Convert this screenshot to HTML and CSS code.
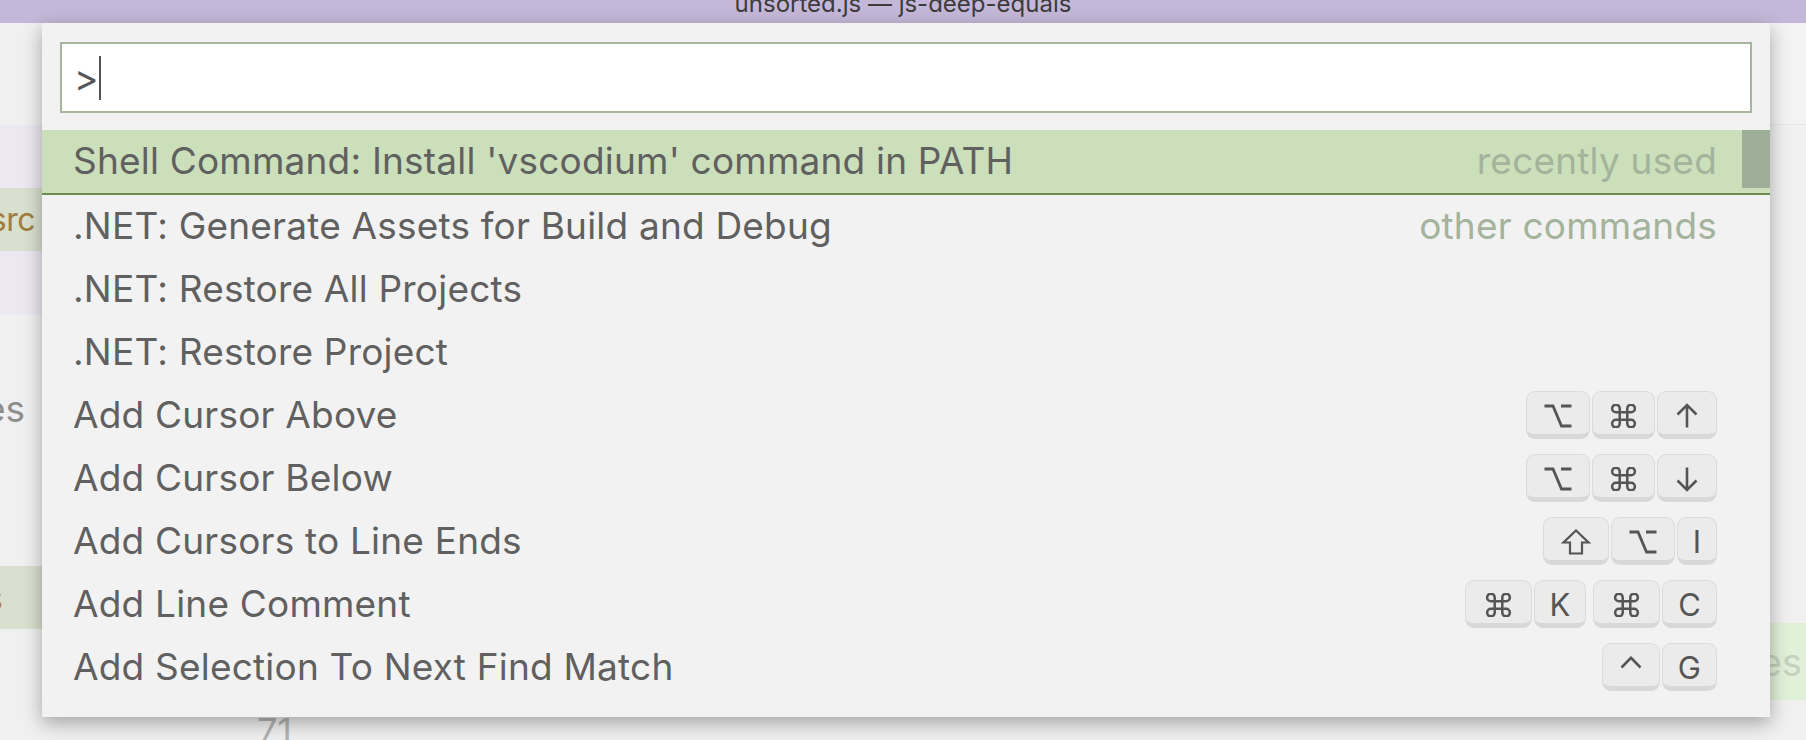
FILE: index.html
```html
<!DOCTYPE html>
<html>
<head>
<meta charset="utf-8">
<title>Command Palette</title>
<link rel="stylesheet" href="styles.css">
</head>
<body>
<div class="titlebar"><span class="title">unsorted.js — js-deep-equals</span></div>
<div class="workbench">
  <div class="sidebar">
    <div class="sb-head"></div>
    <div class="sb-row hover"></div>
    <div class="sb-row selected"><span class="folder">src</span></div>
    <div class="sb-row hover"></div>
    <div class="sb-row"></div>
    <div class="sb-row"><span class="muted">es</span></div>
    <div class="sb-row"></div>
    <div class="sb-row"></div>
    <div class="sb-row selected"><span class="file">s</span></div>
  </div>
  <div class="editor">
    <div class="tabs"></div>
    <div class="editor-body">
      <div class="find-band"><span>es</span></div>
      <div class="gutter-line">71</div>
    </div>
  </div>
</div>

<div class="quick-input">
  <div class="qi-header">
    <div class="qi-box"><span class="qi-value">&gt;</span><span class="caret"></span></div>
  </div>
  <div class="qi-list">
    <div class="qi-row focused"><span class="label">Shell Command: Install 'vscodium' command in PATH</span><span class="desc">recently used</span></div>
    <div class="qi-row"><span class="label">.NET: Generate Assets for Build and Debug</span><span class="desc">other commands</span></div>
    <div class="qi-row"><span class="label">.NET: Restore All Projects</span></div>
    <div class="qi-row"><span class="label">.NET: Restore Project</span></div>
    <div class="qi-row"><span class="label">Add Cursor Above</span>
      <span class="keys">
        <span class="key"><svg class="k-opt" width="32" height="26" viewBox="0 0 32 26"><path d="M2.5 3H11L19.5 23H29.5M19 3H29.5"/></svg></span>
        <span class="key"><svg class="k-cmd" width="31" height="24" viewBox="2.5 2.5 19 19"><path d="M9 9V6a3 3 0 1 0-3 3H18a3 3 0 1 0-3-3V18a3 3 0 1 0 3-3H6a3 3 0 1 0 3 3Z"/></svg></span>
        <span class="key"><svg class="k-arrow" width="28" height="26" viewBox="0 0 28 26"><path d="M14 2V24.5M4.5 11.5L14 2L23.5 11.5"/></svg></span>
      </span>
    </div>
    <div class="qi-row"><span class="label">Add Cursor Below</span>
      <span class="keys">
        <span class="key"><svg class="k-opt" width="32" height="26" viewBox="0 0 32 26"><path d="M2.5 3H11L19.5 23H29.5M19 3H29.5"/></svg></span>
        <span class="key"><svg class="k-cmd" width="31" height="24" viewBox="2.5 2.5 19 19"><path d="M9 9V6a3 3 0 1 0-3 3H18a3 3 0 1 0-3-3V18a3 3 0 1 0 3-3H6a3 3 0 1 0 3 3Z"/></svg></span>
        <span class="key"><svg class="k-arrow" width="28" height="26" viewBox="0 0 28 26"><path d="M14 1.5V24M4.5 14.5L14 24L23.5 14.5"/></svg></span>
      </span>
    </div>
    <div class="qi-row"><span class="label">Add Cursors to Line Ends</span>
      <span class="keys">
        <span class="key"><svg class="k-shift" width="34" height="26" viewBox="0 0 34 26"><path d="M17 1.5L29.5 13.5H23V24.5H11V13.5H4.5Z"/></svg></span>
        <span class="key"><svg class="k-opt" width="32" height="26" viewBox="0 0 32 26"><path d="M2.5 3H11L19.5 23H29.5M19 3H29.5"/></svg></span>
        <span class="key">I</span>
      </span>
    </div>
    <div class="qi-row"><span class="label">Add Line Comment</span>
      <span class="keys">
        <span class="key wide"><svg class="k-cmd" width="31" height="24" viewBox="2.5 2.5 19 19"><path d="M9 9V6a3 3 0 1 0-3 3H18a3 3 0 1 0-3-3V18a3 3 0 1 0 3-3H6a3 3 0 1 0 3 3Z"/></svg></span>
        <span class="key">K</span>
        <span class="chord-sep"></span>
        <span class="key wide"><svg class="k-cmd" width="31" height="24" viewBox="2.5 2.5 19 19"><path d="M9 9V6a3 3 0 1 0-3 3H18a3 3 0 1 0-3-3V18a3 3 0 1 0 3-3H6a3 3 0 1 0 3 3Z"/></svg></span>
        <span class="key">C</span>
      </span>
    </div>
    <div class="qi-row"><span class="label">Add Selection To Next Find Match</span>
      <span class="keys">
        <span class="key"><svg class="k-ctrl" width="26" height="24" viewBox="0 0 26 24"><path d="M3.5 11.5L13 1.8L22.5 11.5"/></svg></span>
        <span class="key">G</span>
      </span>
    </div>
    <div class="scroll-thumb"></div>
  </div>
</div>
</body>
</html>
```

FILE: styles.css
```css
* { box-sizing: border-box; }

html, body {
  margin: 0;
  padding: 0;
}

body {
  width: 1806px;
  height: 740px;
  overflow: hidden;
  position: relative;
  background: #f0f0f0;
  font-family: Inter, "Liberation Sans", sans-serif;
}

/* ---------- window title ---------- */
.titlebar {
  height: 23px;
  background: #c5b7d8;
  display: flex;
  justify-content: center;
  align-items: flex-end;
  padding-bottom: 7px;
  overflow: hidden;
}

.title {
  font-size: 24px;
  line-height: 25px;
  color: #3c3c3c;
  white-space: nowrap;
}

/* ---------- workbench underneath ---------- */
.workbench {
  display: flex;
  height: 717px;
}

.sidebar {
  width: 148px;
  flex: none;
  display: flex;
  flex-direction: column;
  background: #f0f0f0;
  overflow: hidden;
  font-size: 37px;
}

.sb-head { height: 102px; flex: none; }

.sb-row {
  height: 63px;
  flex: none;
  display: flex;
  align-items: center;
  justify-content: flex-end;
  white-space: nowrap;
}

.sb-row.hover { background: #ece7f0; }
.sb-row.selected { background: #d9e0cf; }

.folder {
  color: #a07d3d;
  padding-right: 113px;
  font-size: 32px;
  letter-spacing: -0.5px;
}
.muted { color: #8e8e8e; padding-right: 123px; }
.file { color: #b3772a; padding-right: 145px; }

.editor {
  flex: 1;
  display: flex;
  flex-direction: column;
  background: #f0f0f0;
  overflow: hidden;
}

.tabs {
  height: 102px;
  flex: none;
  background: #f3f3f3;
  border-bottom: 1px solid #e8e8e8;
}

.editor-body {
  flex: 1;
  min-height: 0;
  display: flex;
  flex-direction: column;
  padding-top: 498px;
}

.find-band {
  height: 77px;
  flex: none;
  background: #e1f1d9;
  display: flex;
  align-items: center;
  justify-content: flex-end;
  padding-right: 4px;
  font-size: 38px;
  color: #c6d1be;
}

.gutter-line {
  height: 63px;
  flex: none;
  padding-left: 109px;
  font-size: 36px;
  line-height: 63px;
  color: #b4b4b4;
}

/* ---------- quick input (command palette) ---------- */
.quick-input {
  position: absolute;
  top: 23px;
  left: 42px;
  width: 1728px;
  height: 694px;
  background: #f2f2f2;
  box-shadow: 0 6px 18px rgba(0, 0, 0, 0.32);
}

.qi-header {
  padding: 19px 18px 17px;
}

.qi-box {
  height: 71px;
  border: 2px solid #a6b59e;
  background: #ffffff;
  display: flex;
  align-items: center;
  padding-left: 12px;
  font-size: 37px;
  color: #555555;
}

.caret {
  width: 2px;
  height: 44px;
  background: #555555;
  margin-left: 1px;
}

.qi-list {
  position: relative;
}

.qi-row {
  height: 63px;
  display: flex;
  align-items: center;
  padding: 0 53px 2px 31px;
  font-size: 37px;
  letter-spacing: 0.2px;
  color: #606060;
  white-space: nowrap;
}

.qi-row.focused {
  height: 65px;
  background: #cbdfba;
  border-bottom: 2px solid #6f8d50;
}

.desc {
  margin-left: auto;
  color: #a4b39c;
}

.keys {
  margin-left: auto;
  display: flex;
  gap: 2px;
  letter-spacing: 0;
}

.chord-sep { width: 3px; }

.key {
  height: 48px;
  display: flex;
  align-items: center;
  justify-content: center;
  padding: 6px 15px 0;
  background: #ebebeb;
  border: 1px solid #dbdbdb;
  border-bottom: 5px solid #d8d8d8;
  border-radius: 9px;
  font-size: 31px;
  line-height: 1;
  color: #555555;
}

.key.wide {
  padding-left: 17px;
  padding-right: 17px;
}

.key svg {
  display: block;
  fill: none;
  stroke: #555555;
  stroke-linecap: butt;
  stroke-linejoin: miter;
}

.k-opt { stroke-width: 2.8; }
.k-cmd { stroke-width: 2; }
.k-arrow { stroke-width: 2.6; }
.k-shift { stroke-width: 2.2; }
.k-ctrl { stroke-width: 2.6; }

.scroll-thumb {
  position: absolute;
  top: 0;
  right: 0;
  width: 28px;
  height: 58px;
  background: #9fae98;
}
```
